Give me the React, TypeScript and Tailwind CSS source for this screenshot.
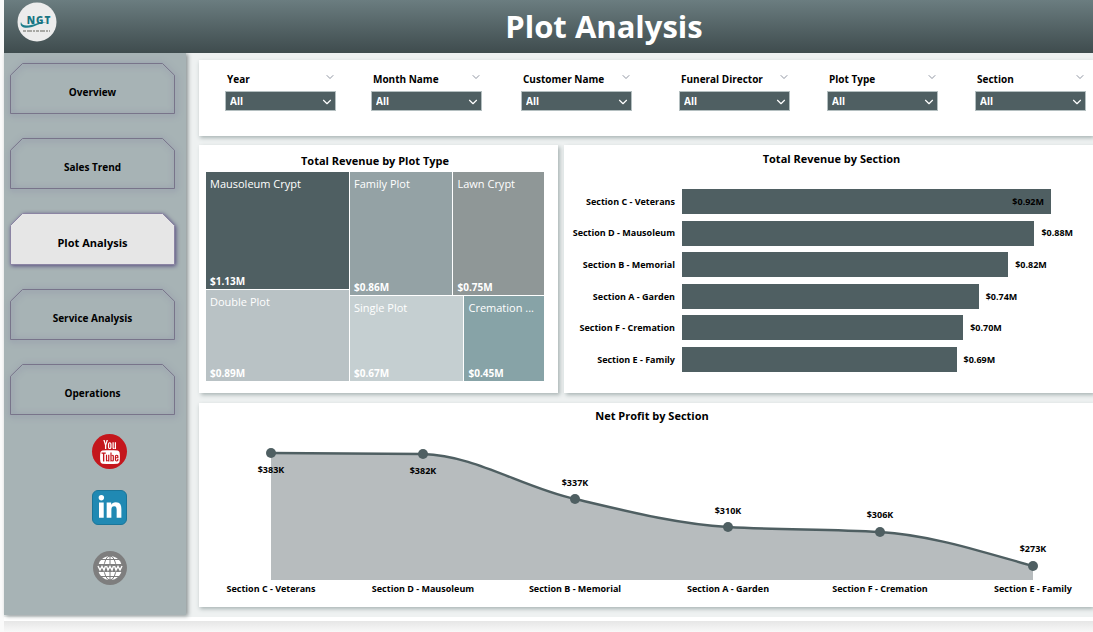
import { ChevronDown } from "lucide-react"
import { FaLinkedinIn } from "react-icons/fa"
import { TfiYoutube } from "react-icons/tfi"

const pages = ["Overview", "Sales Trend", "Plot Analysis", "Service Analysis", "Operations"]

const filters = ["Year", "Month Name", "Customer Name", "Funeral Director", "Plot Type", "Section"]

const sections = [
  { name: "Section C - Veterans", value: "$0.92M", size: 100 },
  { name: "Section D - Mausoleum", value: "$0.88M", size: 95.5 },
  { name: "Section B - Memorial", value: "$0.82M", size: 88.4 },
  { name: "Section A - Garden", value: "$0.74M", size: 80.4 },
  { name: "Section F - Cremation", value: "$0.70M", size: 76.2 },
  { name: "Section E - Family", value: "$0.69M", size: 74.4 },
]

const profit = [
  { name: "Section C - Veterans", value: "$383K", x: 72, y: 26, label: 46 },
  { name: "Section D - Mausoleum", value: "$382K", x: 224, y: 27, label: 47 },
  { name: "Section B - Memorial", value: "$337K", x: 376, y: 72, label: 59 },
  { name: "Section A - Garden", value: "$310K", x: 529, y: 100, label: 87 },
  { name: "Section F - Cremation", value: "$306K", x: 681, y: 105, label: 91 },
  { name: "Section E - Family", value: "$273K", x: 834, y: 139, label: 125 },
]

const curve =
  "M72 26 L224 27 C275 28 325 61 376 72 C427 84 478 97 529 100 C580 103 630 102 681 105 C732 108 783 125 834 139"

function NavButton({ label, active }: { label: string; active: boolean }) {
  return (
    <button
      type="button"
      aria-current={active ? "page" : undefined}
      className={
        active
          ? "relative h-[52px] w-full text-[11px] font-bold text-black"
          : "relative h-[51px] w-full text-[10px] font-bold text-black"
      }
    >
      <svg
        viewBox="0 0 165 52"
        preserveAspectRatio="none"
        className={
          active
            ? "absolute inset-0 h-full w-full overflow-visible drop-shadow-[1px_1px_2px_#554a7d]"
            : "absolute inset-0 h-full w-full overflow-visible drop-shadow-[1px_1px_3px_#6f6796]"
        }
      >
        <path
          d="M12.5 .5H152.5L164.5 12.5V51.5H.5V12.5Z"
          fill={active ? "#e6e6e6" : "none"}
          stroke={active ? "#8b84a3" : "#77738a"}
        />
      </svg>
      <span className="relative top-1">{label}</span>
    </button>
  )
}

function Logo() {
  return (
    <svg viewBox="0 0 40 40" className="h-10 w-10">
      <circle cx="20" cy="20" r="19.5" fill="#ececec" />
      <path d="M4 20C2 25 8 27 15 25C22 23 24 20 31 21C24 19 20 22 14 23C9 24 5 24 4 20Z" fill="#1f7f8c" />
      <text x="22" y="22" textAnchor="middle" fontSize="10" fontWeight="800" letterSpacing="1" fill="#187482">
        NGT
      </text>
      <path d="M6 29H33" stroke="#64645c" strokeDasharray="3 1 5 1 2 1" />
    </svg>
  )
}

function WebIcon() {
  return (
    <svg viewBox="0 0 34 34" className="h-[34px] w-[34px]">
      <circle cx="17" cy="17" r="17" fill="#7e7e7e" />
      <circle cx="17" cy="17" r="12" fill="#fff" />
      <g fill="none" stroke="#7e7e7e">
        <path d="M17 5V29M8 8.500H26M8 25.500H26" />
        <ellipse cx="17" cy="17" rx="6" ry="12" />
      </g>
      <path d="M3 13H31V21H3Z" fill="#7e7e7e" />
      <path
        d="M5 15L7 19L9 15.500L11 19L12.500 15M13.500 15L15 19L17 15.500L19 19L20.500 15M21.500 15L23 19L25 15.500L27 19L29 15"
        fill="none"
        stroke="#fff"
        strokeWidth="1.400"
      />
    </svg>
  )
}

function Filter({ label }: { label: string }) {
  const id = label.toLowerCase().replace(" ", "-")
  return (
    <div className="w-[111px]">
      <div className="flex h-5 items-start justify-between pl-[2px]">
        <label htmlFor={id} className="text-[10px] leading-4 font-bold whitespace-nowrap">
          {label}
        </label>
        <button type="button" aria-label={`${label} options`}>
          <ChevronDown className="h-3 w-3 text-gray-500" strokeWidth={1.5} />
        </button>
      </div>
      <div className="relative">
        <select
          id={id}
          className="block h-5 w-full appearance-none border border-[#b4bfc0] bg-[#4f5f62] pl-1 text-[10px] leading-4 font-bold text-white"
        >
          <option>All</option>
        </select>
        <ChevronDown className="pointer-events-none absolute top-1 right-0.5 h-[14px] w-[14px] text-white" strokeWidth={2} />
      </div>
    </div>
  )
}

function Tile({ name, value, className }: { name: string; value: string; className: string }) {
  return (
    <div className={`flex min-w-0 basis-0 flex-col justify-between px-1 pt-1 text-white ${className}`}>
      <span className="text-[11px] leading-4 whitespace-nowrap">{name}</span>
      <span className="text-[10px] leading-4 font-bold">{value}</span>
    </div>
  )
}

export default function App() {
  return (
    <div className="min-h-screen overflow-hidden bg-[#fafafa] pl-1 font-['Open_Sans','Noto_Sans',sans-serif] text-black">
      <header className="relative flex h-[53px] items-center justify-center bg-linear-to-b from-[#6b7d80] to-[#3f4c4e] pl-[111px]">
        <a href="#home" aria-label="NGT home" className="absolute top-[2px] left-[13px]">
          <Logo />
        </a>
        <h1 className="text-[31px] font-bold text-white">Plot Analysis</h1>
      </header>

      <div className="flex border-b-4 border-white bg-[#eef1f1]">
        <aside className="mb-[2px] flex w-[182px] shrink-0 flex-col bg-[#a7b3b5] pt-[10px] pr-[11px] pl-[6px] shadow-[2px_1px_4px_#8b9394]">
          <nav className="flex flex-col gap-6">
            {pages.map((page) => (
              <NavButton key={page} label={page} active={page === "Plot Analysis"} />
            ))}
          </nav>
          <div className="ml-[34px] flex flex-col items-center pt-[19px]">
            <a
              href="#youtube"
              aria-label="YouTube"
              className="flex h-[35px] w-[35px] items-center justify-center rounded-full bg-[#c4161c]"
            >
              <TfiYoutube className="h-6 w-6 text-white" />
            </a>
            <a
              href="#linkedin"
              aria-label="LinkedIn"
              className="mt-[21px] flex h-[35px] w-[35px] items-center justify-center rounded-md border border-[#1a7599] bg-[#2089b3]"
            >
              <FaLinkedinIn className="h-[26px] w-[26px] text-white" />
            </a>
            <a href="#web" aria-label="Website" className="mt-[26px]">
              <WebIcon />
            </a>
          </div>
        </aside>

        <main className="flex min-w-0 flex-1 flex-col pt-[7px] pb-[10px] pl-[13px]">
          <section className="grid h-[76px] grid-cols-[146fr_150fr_158fr_148fr_148fr_118fr] bg-white pt-[11px] pl-[26px] shadow-[1px_2px_4px_#aab5b5]">
            {filters.map((filter) => (
              <Filter key={filter} label={filter} />
            ))}
          </section>

          <div className="mt-[9px] flex h-[248px] gap-[6px]">
            <section className="flex w-[359px] shrink-0 flex-col bg-white pt-[7px] pr-[14px] pb-3 pl-[7px] shadow-[2px_2px_4px_#aab5b5]">
              <h2 className="mb-[2px] text-center text-[11px] leading-[18px] font-bold">Total Revenue by Plot Type</h2>
              <div className="flex min-h-0 flex-1 gap-px">
                <div className="flex min-w-0 grow-[143] basis-0 flex-col gap-px">
                  <Tile name="Mausoleum Crypt" value="$1.13M" className="grow-[118] bg-[#4f5f62]" />
                  <Tile name="Double Plot" value="$0.89M" className="grow-[91] bg-[#b9c2c5]" />
                </div>
                <div className="flex min-w-0 grow-[194] basis-0 flex-col gap-px">
                  <div className="flex grow-[124] basis-0 gap-px">
                    <Tile name="Family Plot" value="$0.86M" className="grow-[103] bg-[#94a2a5]" />
                    <Tile name="Lawn Crypt" value="$0.75M" className="grow-[90] bg-[#8f9797]" />
                  </div>
                  <div className="flex grow-[85] basis-0 gap-px">
                    <Tile name="Single Plot" value="$0.67M" className="grow-[115] bg-[#c5cfd1]" />
                    <Tile name="Cremation ..." value="$0.45M" className="grow-[78] bg-[#87a3a7]" />
                  </div>
                </div>
              </div>
            </section>

            <section className="min-w-0 flex-1 bg-white pt-[5px] shadow-[2px_2px_4px_#aab5b5]">
              <h2 className="pl-[6px] text-center text-[11px] leading-[18px] font-bold">Total Revenue by Section</h2>
              <div className="mt-[21px] flex h-[183px] flex-col justify-between pr-[42px] text-[9px] font-bold">
                {sections.map((section) => (
                  <div key={section.name} className="flex items-center">
                    <span className="w-[118px] shrink-0 pr-[7px] text-right whitespace-nowrap">{section.name}</span>
                    <div className="flex flex-1 items-center">
                      <div
                        className="flex h-[25px] shrink-0 items-center justify-end bg-[#4f5f62] pr-[7px]"
                        style={{ width: `${section.size}%` }}
                      >
                        {section.size === 100 && section.value}
                      </div>
                      {section.size < 100 && <span className="w-0 pl-[7px]">{section.value}</span>}
                    </div>
                  </div>
                ))}
              </div>
            </section>
          </div>

          <section className="mt-[10px] bg-white pt-[4px] shadow-[1px_2px_4px_#aab5b5]">
            <h2 className="pl-3 text-center text-[11px] leading-[18px] font-bold">Net Profit by Section</h2>
            <svg viewBox="0 0 894 180" className="mt-[2px] block w-full" role="img" aria-label="Net profit by section">
              <path d={`${curve} V153 H72 Z`} fill="#b7bcbe" />
              <path d={curve} fill="none" stroke="#4f5f62" strokeWidth="2.500" />
              {profit.map((point) => (
                <g key={point.name} textAnchor="middle" fontSize="9" fontWeight="700">
                  <circle cx={point.x} cy={point.y} r="5" fill="#4f5f62" />
                  <text x={point.x} y={point.label}>
                    {point.value}
                  </text>
                  <text x={point.x} y="165">
                    {point.name}
                  </text>
                </g>
              ))}
            </svg>
          </section>
        </main>
      </div>
      <div className="h-3 bg-linear-to-b from-[#e6e6e6] to-[#fafafa]" />
    </div>
  )
}
